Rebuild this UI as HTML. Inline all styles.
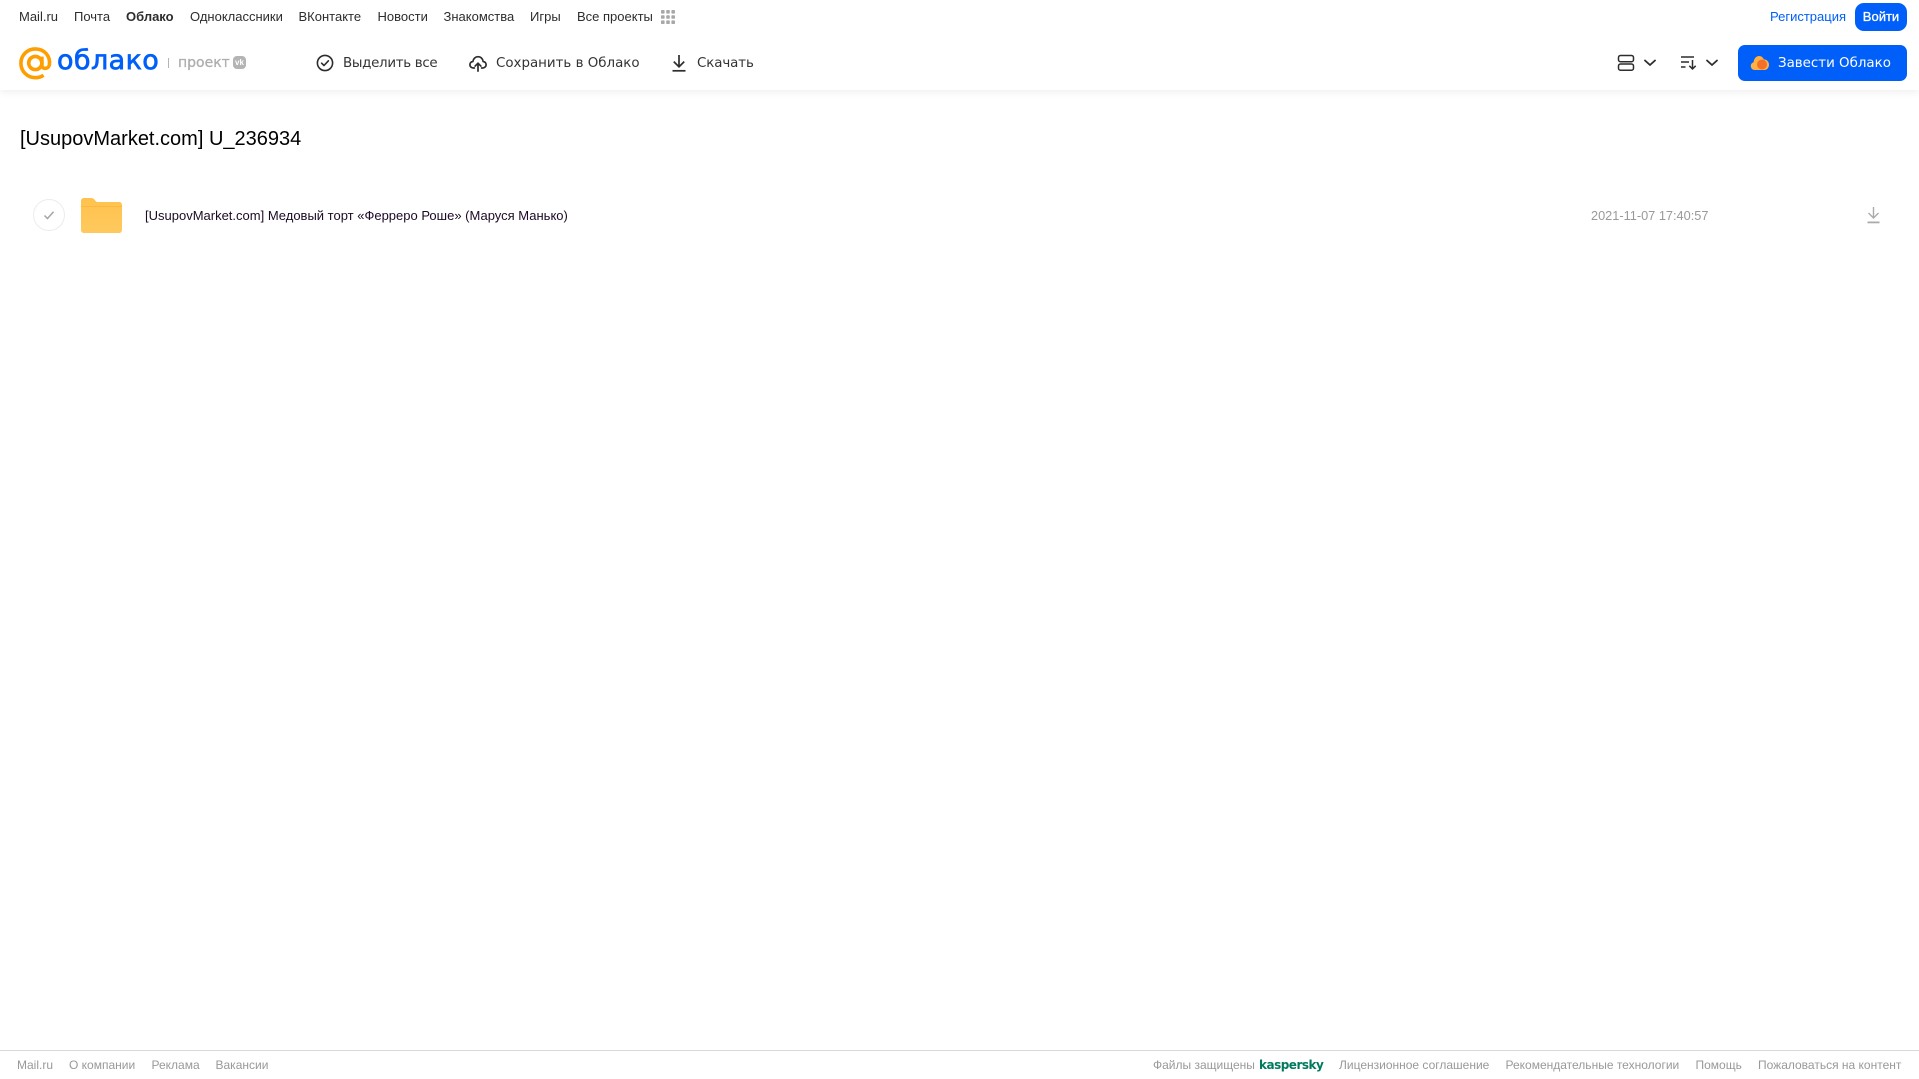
<!DOCTYPE html>
<html lang="ru">
<head>
<meta charset="utf-8">
<title>Облако</title>
<style>
html,body{margin:0;padding:0;background:#fff;}
body{width:1919px;height:1079px;position:relative;overflow:hidden;font-family:"Liberation Sans",sans-serif;}
.t{position:absolute;white-space:nowrap;line-height:20px;height:20px;}
.n{font-size:13px;color:#2c2d2e;top:7px;}
.b{top:53px;font-family:"DejaVu Sans","Liberation Sans",sans-serif;font-size:13.4px;color:#333;line-height:22px;height:22px;}
.f{font-size:12px;color:#999;top:1055px;}
svg{position:absolute;overflow:visible;}
#hdr{position:absolute;left:0;top:0;width:1919px;height:90px;background:#fff;box-shadow:0 2px 8px rgba(0,0,0,.07);}
.btn{position:absolute;background:#005ff9;}
</style>
</head>
<body>
<div id="hdr"></div>

<span class="t n" style="left:19px">Mail.ru</span>
<span class="t n" style="left:74px">Почта</span>
<span class="t n" style="left:126px;font-weight:bold">Облако</span>
<span class="t n" style="left:190px">Одноклассники</span>
<span class="t n" style="left:298.5px">ВКонтакте</span>
<span class="t n" style="left:377.5px">Новости</span>
<span class="t n" style="left:443.5px">Знакомства</span>
<span class="t n" style="left:530px">Игры</span>
<span class="t n" style="left:577px">Все проекты</span>
<svg style="left:660px;top:9px" width="16" height="16" viewBox="0 0 16 16" fill="#a8a8a8">
<rect x="1" y="1" width="3.6" height="3.6" rx=".8"/><rect x="6.2" y="1" width="3.6" height="3.6" rx=".8"/><rect x="11.4" y="1" width="3.6" height="3.6" rx=".8"/>
<rect x="1" y="6.2" width="3.6" height="3.6" rx=".8"/><rect x="6.2" y="6.2" width="3.6" height="3.6" rx=".8"/><rect x="11.4" y="6.2" width="3.6" height="3.6" rx=".8"/>
<rect x="1" y="11.4" width="3.6" height="3.6" rx=".8"/><rect x="6.2" y="11.4" width="3.6" height="3.6" rx=".8"/><rect x="11.4" y="11.4" width="3.6" height="3.6" rx=".8"/>
</svg>

<!-- logo -->
<svg style="left:19px;top:47px" width="33" height="33" viewBox="0 0 33 33" fill="none" stroke="#ff9e00" stroke-width="3.6">
<circle cx="16.3" cy="16" r="6.6"/>
<path d="M22.9 9.6V18.5C22.9 22.3 29.6 22.6 30.4 17.6C31.6 8.8 25 1.9 16.3 1.9C8.4 1.9 1.9 8.3 1.9 16.2C1.9 24.4 8.5 30.7 16.3 30.7C19.6 30.7 22.2 29.8 24.6 28.2"/>
</svg>
<span class="t" style="left:57px;top:43px;line-height:36px;height:36px;font-size:27px;font-family:'DejaVu Sans',sans-serif;color:#005ff9;letter-spacing:.4px;-webkit-text-stroke:.7px #005ff9">облако</span>
<div style="position:absolute;left:168px;top:58px;width:1px;height:10px;background:#b5b5b5"></div>
<span class="t" style="left:178px;top:53px;font-family:'DejaVu Sans',sans-serif;font-size:14px;color:#aeaeae;-webkit-text-stroke:.3px #aeaeae">проект</span>
<div style="position:absolute;left:233px;top:56px;width:13px;height:13px;border-radius:4px;background:#b4b4b4;color:#fff;font-size:8px;font-weight:bold;line-height:13px;text-align:center">vk</div>

<!-- toolbar -->
<svg style="left:316px;top:54px" width="18" height="18" viewBox="0 0 18 18" fill="none" stroke="#2c2d2e" stroke-width="1.6">
<circle cx="9" cy="9" r="7.6"/><path d="M5.6 9.2L8 11.5L12.4 6.8" stroke-linecap="round" stroke-linejoin="round"/>
</svg>
<span class="t b" style="left:343px;letter-spacing:-.3px">Выделить все</span>
<svg style="left:469px;top:54px" width="18" height="18" viewBox="0 0 20 20" fill="none" stroke="#2c2d2e" stroke-width="1.9" stroke-linecap="round" stroke-linejoin="round">
<path d="M6 15.6H5C2.6 15.6 1 13.9 1 11.9C1 10 2.4 8.5 4.3 8.3C4.8 5.2 7.2 3 10 3C13 3 15.3 5.2 15.7 8.3C17.6 8.5 19 10 19 11.9C19 13.9 17.4 15.6 15 15.6H14"/>
<path d="M10 19V10.4M6.8 13.4L10 10.2L13.2 13.4"/>
</svg>
<span class="t b" style="left:496px">Сохранить в Облако</span>
<svg style="left:671px;top:54px" width="16" height="18" viewBox="0 0 16 18" fill="none" stroke="#2c2d2e" stroke-width="1.7">
<path d="M8 1V12.5M2.8 7.6L8 12.8L13.2 7.6"/><path d="M1.5 16.8H14.5"/>
</svg>
<span class="t b" style="left:697px;letter-spacing:-.1px">Скачать</span>

<!-- view & sort -->
<svg style="left:1617px;top:54px" width="18" height="18" viewBox="0 0 18 18" fill="none" stroke="#2c2d2e" stroke-width="1.5">
<rect x="1.5" y="1.5" width="15" height="6.2" rx="2"/><rect x="1.5" y="10" width="15" height="6.2" rx="2"/>
</svg>
<svg style="left:1643px;top:59px" width="14" height="8" viewBox="0 0 14 8" fill="none" stroke="#2c2d2e" stroke-width="1.8" stroke-linecap="round" stroke-linejoin="round">
<path d="M2 1.5L7 6L12 1.5"/>
</svg>
<svg style="left:1680px;top:55px" width="18" height="16" viewBox="0 0 18 16" fill="none" stroke="#2c2d2e" stroke-width="1.5">
<path d="M1 2H14M1 7H9M1 12H5.5"/><path d="M12.5 5V14M9.3 10.8L12.5 14L15.7 10.8"/>
</svg>
<svg style="left:1705px;top:59px" width="14" height="8" viewBox="0 0 14 8" fill="none" stroke="#2c2d2e" stroke-width="1.8" stroke-linecap="round" stroke-linejoin="round">
<path d="M2 1.5L7 6L12 1.5"/>
</svg>

<span class="t" style="left:1770px;top:7px;font-size:13px;color:#005ff9">Регистрация</span>
<div class="btn" style="left:1855px;top:3px;width:52px;height:28px;border-radius:9px;color:#fff;font-size:13px;line-height:28px;text-align:center;-webkit-text-stroke:.3px #fff">Войти</div>
<div class="btn" style="left:1738px;top:45px;width:169px;height:36px;border-radius:7px"></div>
<svg style="left:1750px;top:54px" width="20" height="18" viewBox="0 0 20 18">
<path d="M5 16C2.4 16 .8 14.2 .8 12C.8 10 2.1 8.7 3.6 8.3C3.9 4.6 6.3 2 9 2C11.3 2 13 3.4 13.8 5.4C16.8 5.4 19 7.8 19 10.7C19 13.8 16.8 16 14 16Z" fill="#ffb23f"/>
<circle cx="12" cy="10.5" r="5" fill="#f4702a"/>
</svg>
<span class="t b" style="left:1778px;color:#fff">Завести Облако</span>

<!-- title -->
<span class="t" style="left:20px;top:126px;height:26px;line-height:26px;font-size:20px;color:#000">[UsupovMarket.com] U_236934</span>

<!-- row -->
<svg style="left:33px;top:199px" width="32" height="32" viewBox="0 0 32 32" fill="none">
<circle cx="16" cy="16" r="15.5" stroke="#ececec" stroke-width="1"/>
<path d="M11.5 16.5L14.5 19.5L20.5 12.8" stroke="#a5a5a5" stroke-width="1.5"/>
</svg>
<svg style="left:81px;top:198px" width="41" height="35" viewBox="0 0 41 35">
<defs><linearGradient id="fg" x1="0" y1="0" x2="0" y2="1"><stop offset="0" stop-color="#ffc24d"/><stop offset="1" stop-color="#ffc95e"/></linearGradient></defs>
<path d="M0 3C0 1.3 1.2 0 3 0H10C12 0 13 .8 14 2.2C15 3.6 15.5 4 17 4H38C39.8 4 41 5.3 41 7V32C41 33.7 39.8 35 38 35H3C1.2 35 0 33.7 0 32Z" fill="url(#fg)"/>
<path d="M0 8H41V9H0Z" fill="#ffb739"/>
</svg>
<span class="t" style="left:145px;top:206px;font-size:13px;color:#1c0a25">[UsupovMarket.com] Медовый торт «Ферреро Роше» (Маруся Манько)</span>
<span class="t" style="left:1591px;top:206px;font-size:12.75px;color:#999">2021-11-07 17:40:57</span>
<svg style="left:1866px;top:206px" width="15" height="18" viewBox="0 0 15 18" fill="none" stroke="#ababab" stroke-width="1.4">
<path d="M7.5 1V12M2.5 7L7.5 12L12.5 7"/><path d="M1.5 16.4H13.5" stroke-width="1.8"/>
</svg>

<!-- footer -->
<div style="position:absolute;left:0;top:1050px;width:1919px;height:1px;background:#d9d9d9"></div>
<span class="t f" style="left:17px">Mail.ru</span>
<span class="t f" style="left:69px">О компании</span>
<span class="t f" style="left:151.5px">Реклама</span>
<span class="t f" style="left:215.5px">Вакансии</span>
<span class="t f" style="left:1153px">Файлы защищены</span>
<span class="t f" style="left:1259px;top:1055px;color:#007a5e;font-weight:bold;font-size:12px;font-family:'DejaVu Sans',sans-serif;letter-spacing:-.5px">kaspersky</span>
<span class="t f" style="left:1339px">Лицензионное соглашение</span>
<span class="t f" style="left:1505.5px">Рекомендательные технологии</span>
<span class="t f" style="left:1695.5px">Помощь</span>
<span class="t f" style="left:1758px">Пожаловаться на контент</span>
</body>
</html>
